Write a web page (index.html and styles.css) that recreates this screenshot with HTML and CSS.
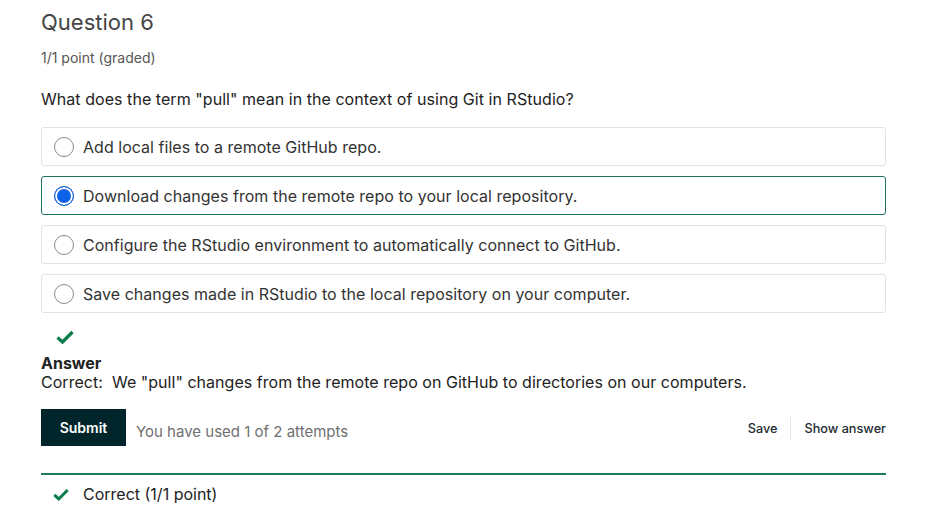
FILE: index.html
```html
<!DOCTYPE html>
<html>
<head>
<meta charset="utf-8">
<link rel="stylesheet" href="styles.css">
</head>
<body>
<div class="problem">
  <h2 class="title">Question 6</h2>
  <div class="points">1/1 point (graded)</div>
  <p class="prompt">What does the term "pull" mean in the context of using Git in RStudio?</p>
  <div class="options">
    <label class="option"><span class="radio"></span><span>Add local files to a remote GitHub repo.</span></label>
    <label class="option selected"><span class="radio checked"></span><span>Download changes from the remote repo to your local repository.</span></label>
    <label class="option"><span class="radio"></span><span>Configure the RStudio environment to automatically connect to GitHub.</span></label>
    <label class="option"><span class="radio"></span><span>Save changes made in RStudio to the local repository on your computer.</span></label>
  </div>
  <div class="status-icon">
    <svg width="18" height="14" viewBox="0 0 18 14"><path d="M1.5 7.5 L6.5 12 L16.5 2" fill="none" stroke="#0d7d4d" stroke-width="3.4"/></svg>
  </div>
  <div class="answer">
    <div class="answer-label">Answer</div>
    <div class="answer-text">Correct:&nbsp; We "pull" changes from the remote repo on GitHub to directories on our computers.</div>
  </div>
  <div class="actions">
    <button class="submit">Submit</button>
    <span class="attempts">You have used 1 of 2 attempts</span>
    <div class="secondary">
      <button class="link">Save</button>
      <span class="sep"></span>
      <button class="link">Show answer</button>
    </div>
  </div>
  <div class="notification">
    <svg width="16" height="13" viewBox="0 0 18 14"><path d="M1.5 7.5 L6.5 12 L16.5 2" fill="none" stroke="#0d7d4d" stroke-width="3.4"/></svg>
    <span>Correct (1/1 point)</span>
  </div>
</div>
</body>
</html>
```
FILE: styles.css
```css
html, body {
  margin: 0;
  padding: 0;
  background: #fff;
}
body {
  font-family: Inter, "Noto Sans", sans-serif;
  color: #222;
}
.problem {
  width: 845px;
  margin-left: 41px;
  padding-top: 8px;
}
.title {
  margin: 0;
  font-size: 22px;
  font-weight: 400;
  line-height: 28px;
  color: #454545;
}
.points {
  margin-top: 13px;
  font-size: 14px;
  line-height: 18px;
  color: #555;
}
.prompt {
  margin: 21px 0 0 0;
  font-size: 16px;
  line-height: 22px;
  letter-spacing: 0.05px;
  color: #222;
}
.options {
  margin-top: 17px;
  display: flex;
  flex-direction: column;
  gap: 10px;
}
.option {
  display: flex;
  align-items: center;
  gap: 9px;
  height: 39px;
  box-sizing: border-box;
  padding-left: 12px;
  border: 1px solid #e3e3e3;
  border-radius: 3px;
  font-size: 16px;
  letter-spacing: 0.03px;
  color: #333;
}
.option.selected {
  border-color: #1f7262;
}
.radio {
  width: 20px;
  height: 20px;
  box-sizing: border-box;
  border: 1px solid #8a8a8a;
  border-radius: 50%;
  background: #fff;
  flex: none;
}
.radio.checked {
  border: 1.5px solid #0a5ad4;
  background: #0a62e8;
  box-shadow: inset 0 0 0 2px #fff;
}
.status-icon {
  margin-top: 15px;
  padding-left: 15px;
  height: 18px;
}
.answer {
  margin-top: 8px;
  font-size: 16px;
  line-height: 19px;
}
.answer-label {
  font-weight: 700;
  color: #222;
}
.answer-text {
  color: #222;
  letter-spacing: 0.03px;
}
.actions {
  margin-top: 17px;
  display: flex;
  align-items: center;
}
.submit {
  height: 37px;
  width: 85px;
  border: none;
  background: #00262b;
  color: #fff;
  font-family: inherit;
  font-size: 14px;
  font-weight: 600;
  padding: 0;
}
.attempts {
  margin-left: 10px;
  margin-top: 7px;
  font-size: 15px;
  color: #707070;
}
.secondary {
  margin-left: auto;
  display: flex;
  align-items: center;
  margin-top: 2px;
}
.link {
  background: none;
  border: none;
  font-family: inherit;
  font-size: 12.7px;
  font-weight: 500;
  color: #1c2b2f;
  padding: 0;
}
.sep {
  width: 1px;
  height: 24px;
  background: #e5e5e5;
  margin: 0 13px;
}
.notification {
  margin-top: 27px;
  border-top: 2px solid #1f7a5c;
  display: flex;
  align-items: center;
  gap: 14px;
  padding-left: 12px;
  padding-top: 9px;
  font-size: 16px;
  color: #222;
}
```
